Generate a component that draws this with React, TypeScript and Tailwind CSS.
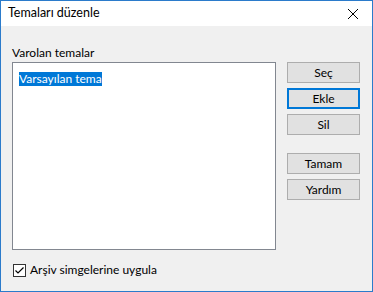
import { useState } from "react";

const font = { fontFamily: 'Lato, "Segoe UI", sans-serif' };

function Button({ label, primary }: { label: string; primary?: boolean }) {
  return (
    <button
      className={
        "w-[73px] h-[21px] bg-[#e1e1e1] text-[12px] leading-none text-black flex items-center justify-center " +
        (primary ? "border-2 border-[#0078d7]" : "border border-[#adadad]")
      }
    >
      {label}
    </button>
  );
}

export default function App() {
  const [checked, setChecked] = useState(true);

  return (
    <div
      className="w-[373px] h-[292px] border border-[#2b7bcb] bg-[#f0f0f0] flex flex-col text-black"
      style={font}
    >
      {/* title bar */}
      <div className="h-[25px] bg-white flex items-center justify-between pl-[7px] pr-[10px]">
        <span className="text-[12.5px]">Temaları düzenle</span>
        <svg width="12" height="12" viewBox="0 0 12 12" className="mr-[3px]">
          <path d="M1 1 L11 11 M11 1 L1 11" stroke="#000" strokeWidth="1" />
        </svg>
      </div>

      <div className="flex-1 flex flex-col px-[11px] pt-[19px]">
        <div className="flex gap-[11px]">
          <div className="flex flex-col">
            <span className="text-[12px] leading-[15px]">Varolan temalar</span>
            <div className="mt-[2px] w-[264px] h-[188px] bg-white border border-[#828790] pt-[2px] pl-[6px]">
              <span className="bg-[#0078d7] text-white text-[12px] leading-[14px] inline-block">
                Varsayılan tema
              </span>
            </div>
          </div>

          <div className="flex flex-col pt-[17px]">
            <div className="flex flex-col gap-[5px]">
              <Button label="Seç" />
              <Button label="Ekle" primary />
              <Button label="Sil" />
            </div>
            <div className="flex flex-col gap-[5px] mt-[18px]">
              <Button label="Tamam" />
              <Button label="Yardım" />
            </div>
          </div>
        </div>

        <label className="flex items-center gap-[4px] mt-[11px] ml-[1px] text-[12px]">
          <span
            onClick={() => setChecked(!checked)}
            className="w-[13px] h-[13px] bg-white border border-[#333] flex items-center justify-center"
          >
            {checked && (
              <svg width="11" height="11" viewBox="0 0 11 11">
                <path d="M1.5 5.5 L4 8 L9.5 2.5" stroke="#000" strokeWidth="1.2" fill="none" />
              </svg>
            )}
          </span>
          Arşiv simgelerine uygula
        </label>
      </div>
    </div>
  );
}
